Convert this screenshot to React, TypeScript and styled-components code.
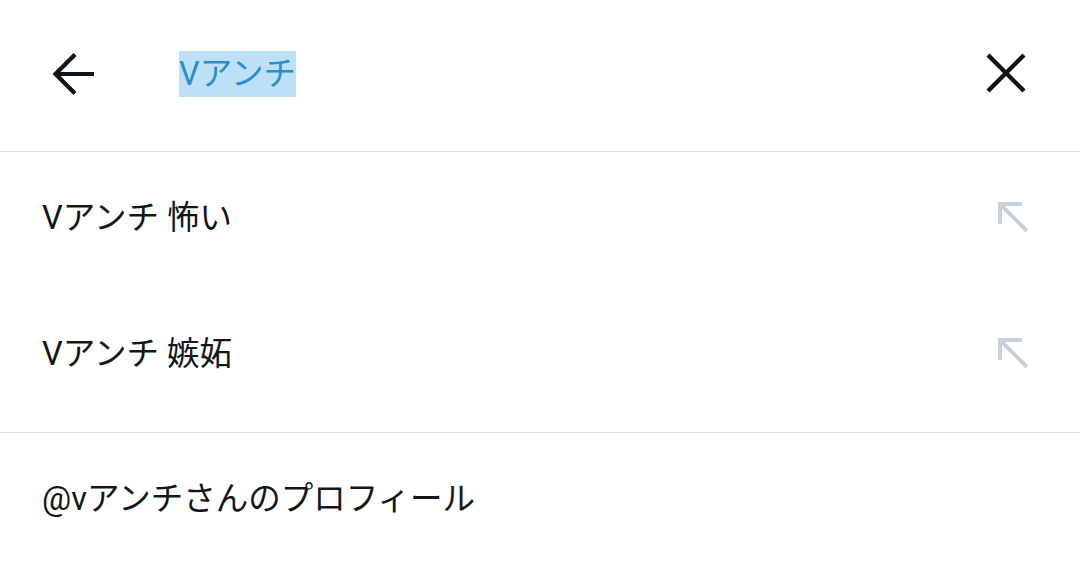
import React from 'react';
import styled, { createGlobalStyle } from 'styled-components';

const GlobalStyle = createGlobalStyle`
  html, body {
    margin: 0;
    padding: 0;
    background: #ffffff;
  }
  body {
    font-family: Roboto, "Noto Sans CJK JP", sans-serif;
    color: #0f1419;
  }
`;

const suggestions = ['Vアンチ 怖い', 'Vアンチ 嫉妬'];

export default function App() {
  return (
    <>
      <GlobalStyle />
      <Page>
        <Header>
          <IconButton aria-label="戻る">
            <svg width="48" height="48" viewBox="0 0 48 48" fill="none">
              <path
                d="M25 4.5 L5.5 24 L25 43.5 M5.5 24 H44"
                stroke="#0f1419"
                strokeWidth="4.2"
              />
            </svg>
          </IconButton>
          <Query>
            <Selected>Vアンチ</Selected>
          </Query>
          <IconButton aria-label="クリア">
            <svg width="48" height="48" viewBox="0 0 48 48" fill="none">
              <path
                d="M6 5 L42 41 M42 5 L6 41"
                stroke="#0f1419"
                strokeWidth="4.4"
              />
            </svg>
          </IconButton>
        </Header>
        <List>
          {suggestions.map((s) => (
            <Row key={s}>
              <RowText>{s}</RowText>
              <FillIcon aria-hidden>
                <svg width="40" height="40" viewBox="0 0 40 40" fill="none">
                  <path
                    d="M28 6 H6 V26 M6 6 L33 33"
                    stroke="#c6d1d8"
                    strokeWidth="4"
                  />
                </svg>
              </FillIcon>
            </Row>
          ))}
        </List>
        <Row>
          <RowText>@vアンチさんのプロフィール</RowText>
        </Row>
      </Page>
    </>
  );
}

const Page = styled.div`
  width: 1080px;
  height: 567px;
  overflow: hidden;
  background: #ffffff;
`;

const Header = styled.header`
  display: flex;
  align-items: center;
  height: 147px;
  padding: 0 50px 4px 50px;
  border-bottom: 1px solid #d9dfe3;
`;

const IconButton = styled.div`
  display: flex;
  align-items: center;
  justify-content: center;
  width: 48px;
  height: 48px;
`;

const Query = styled.div`
  flex: 1;
  margin-left: 81px;
  font-size: 32.5px;
  line-height: 46px;
`;

const Selected = styled.span`
  display: inline-block;
  color: #2a8fcc;
  background: #bde0f7;
`;

const List = styled.div`
  padding-bottom: 8px;
  border-bottom: 1px solid #d9dfe3;
`;

const Row = styled.div`
  display: flex;
  align-items: center;
  justify-content: space-between;
  height: 132px;
  padding: 0 46px 4px 42px;
`;

const RowText = styled.span`
  font-size: 32.5px;
  line-height: 46px;
  color: #14171a;
`;

const FillIcon = styled.span`
  display: flex;
  width: 40px;
  height: 40px;
`;
